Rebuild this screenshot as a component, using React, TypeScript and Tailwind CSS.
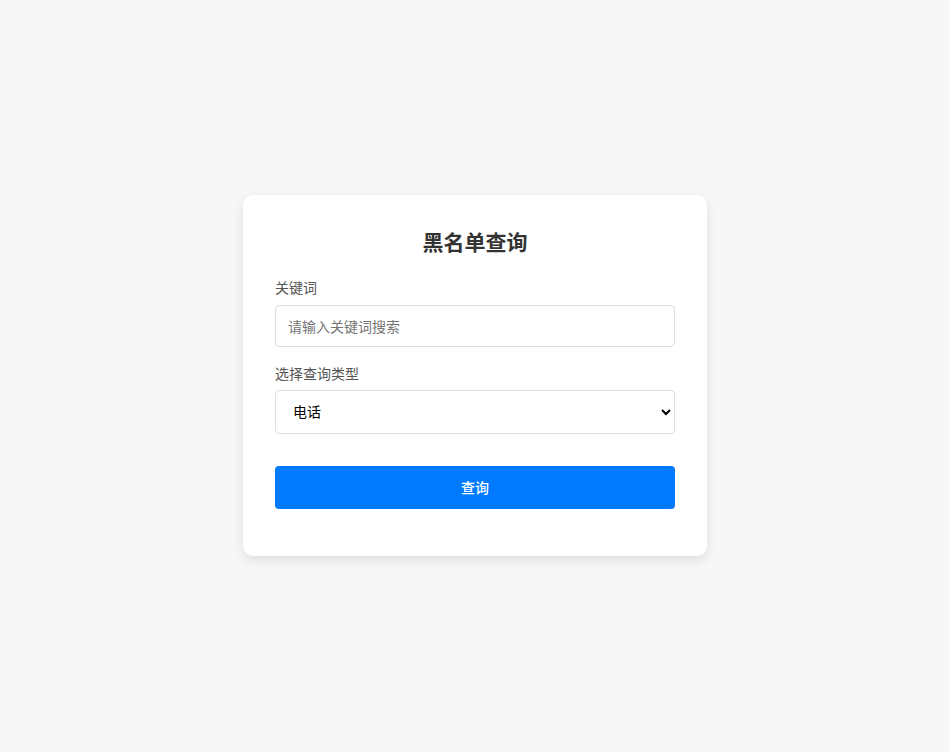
import * as React from "react";

export default function App() {
    const [keyword, setKeyword] = React.useState("");
    const [type, setType] = React.useState("phone");

    return (
        <div className="min-h-screen w-full bg-[#f7f7f7] flex items-center justify-center font-['Noto_Sans_CJK_SC','Noto_Sans',sans-serif]">
            <div className="w-[464px] bg-white rounded-[10px] shadow-[0_4px_12px_rgba(0,0,0,0.1)] px-8 pt-8 pb-[47px] -mt-[1px]">
                <h2 className="text-[21px] leading-[28px] font-bold text-[#333] text-center mb-[22px]">黑名单查询</h2>

                <div className="mb-4">
                    <label className="block text-[14px] leading-[20px] text-[#555] mb-[8px]">关键词</label>
                    <input
                        type="text"
                        value={keyword}
                        onChange={(e) => setKeyword(e.target.value)}
                        placeholder="请输入关键词搜索"
                        className="block w-full h-[42px] px-3 border border-[#ddd] rounded-[4px] text-[14px] text-[#333] placeholder:text-[#757575] outline-none"
                    />
                </div>

                <div className="mb-8">
                    <label className="block text-[14px] leading-[20px] text-[#555] mb-[7px]">选择查询类型</label>
                    <select
                        value={type}
                        onChange={(e) => setType(e.target.value)}
                        className="block w-full h-[44px] pl-[13px] pr-3 pb-[2px] border border-[#ddd] rounded-[4px] text-[14px] text-black bg-white outline-none"
                    >
                        <option value="phone">电话</option>
                        <option value="id">身份证</option>
                        <option value="name">姓名</option>
                    </select>
                </div>

                <button className="block w-full h-[43px] rounded-[4px] bg-[#007bff] text-white text-[14px] font-medium">
                    查询
                </button>
            </div>
        </div>
    );
}
